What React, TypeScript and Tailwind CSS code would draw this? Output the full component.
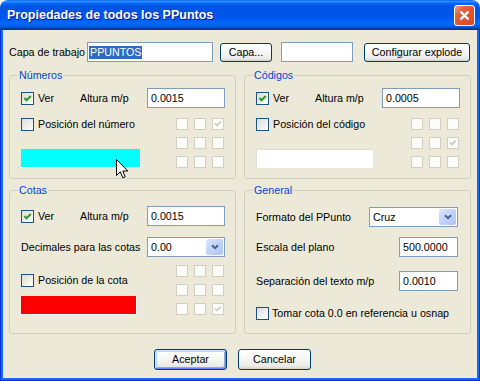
import type { ReactNode } from 'react';

const BTN =
  'flex shrink-0 items-center justify-center rounded-[3px] border border-[#003C74] bg-[linear-gradient(180deg,#FFFFFF_0%,#F7F7F4_45%,#ECEBE6_85%,#D6D0C5_100%)]';
const FIELD = 'flex shrink-0 items-center border border-[#7F9DB9] bg-white pl-[3px]';

function CheckBox({ checked }: { checked?: boolean }) {
  return (
    <span className="flex h-[13px] w-[13px] shrink-0 items-center justify-center border border-[#1C5180] bg-[linear-gradient(135deg,#DCDCD7_0%,#F4F4F1_70%,#FFFFFF_100%)]">
      {checked ? (
        <svg width="11" height="11" viewBox="0 0 11 11">
          <path d="M2.5 5 L4.5 7.3 L8.8 3" fill="none" stroke="#21A121" strokeWidth="2" />
        </svg>
      ) : null}
    </span>
  );
}

function PosGrid({ on }: { on: number }) {
  return (
    <div className="grid grid-cols-[12px_12px_12px] gap-x-[6px] gap-y-[7px]">
      {Array.from({ length: 9 }, (_, i) => (
        <span
          key={i}
          className="flex h-[12px] w-[12px] items-center justify-center border border-[#D2CFC2] bg-[#FBFBF8]"
        >
          {i === on ? (
            <svg width="10" height="10" viewBox="0 0 10 10">
              <path d="M2 4.5 L4 6.5 L8 2.5" fill="none" stroke="#C8C6B8" strokeWidth="1.5" />
            </svg>
          ) : null}
        </span>
      ))}
    </div>
  );
}

function DropDown({ value, width }: { value: string; width: string }) {
  return (
    <div className={`flex h-[20px] shrink-0 items-stretch border border-[#7F9DB9] bg-white ${width}`}>
      <span className="flex flex-1 items-center pl-[3px]">{value}</span>
      <span className="m-[1px] flex w-[17px] items-center justify-center rounded-[2px] bg-[linear-gradient(135deg,#DCE6FE_0%,#C1D3FB_50%,#AFC4F3_100%)]">
        <svg width="8" height="6" viewBox="0 0 8 6">
          <path d="M1 1.2 L4 4.2 L7 1.2" fill="none" stroke="#4D6185" strokeWidth="2" />
        </svg>
      </span>
    </div>
  );
}

function Group({ title, children, className }: { title: string; children: ReactNode; className: string }) {
  return (
    <fieldset className="min-w-0 rounded-[3px] border border-[#D0D0BF] p-0">
      <legend className="ml-[8px] px-[1px] leading-[13px] text-[#0046D5]">{title}</legend>
      <div className={className}>{children}</div>
    </fieldset>
  );
}

function VerRow({ value }: { value: string }) {
  return (
    <div className="flex h-[20px] items-center">
      <label className="flex w-[59px] shrink-0 items-center gap-[4px]">
        <CheckBox checked />
        Ver
      </label>
      <span className="w-[67px] shrink-0">Altura m/p</span>
      <div className={`${FIELD} h-[20px] w-[78px]`}>{value}</div>
    </div>
  );
}

function Cursor() {
  return (
    <svg className="absolute left-[95px] top-[10px]" width="13" height="21" viewBox="0 0 13 21">
      <path
        d="M0.5 0.5 L0.5 16.5 L4.3 12.8 L6.8 18.8 L9.2 17.8 L6.8 12 L11.8 12 Z"
        fill="#FFFFFF"
        stroke="#000000"
        strokeWidth="1"
      />
    </svg>
  );
}

export default function App() {
  return (
    <div className="flex h-[381px] w-[480px] flex-col whitespace-nowrap font-['Liberation_Sans',Arial,sans-serif] text-[10.7px] leading-[13px] text-black">
      <div className="flex h-[30px] shrink-0 items-center justify-between rounded-t-[8px] bg-[linear-gradient(180deg,#0058EE_0%,#3593FF_4%,#288EFF_6%,#127DFF_8%,#036FFC_10%,#0262EE_14%,#0057E5_20%,#0054E3_24%,#0055EB_56%,#005BF5_66%,#026AFE_76%,#0062EF_86%,#0052D6_92%,#0040AB_94%,#003092_100%)] pl-[7px] pr-[5px]">
        <span className="text-[12.5px] font-bold text-white [text-shadow:1px_1px_0_#0A1883]">
          Propiedades de todos los PPuntos
        </span>
        <button className="flex h-[21px] w-[21px] items-center justify-center rounded-[3px] border border-white bg-[linear-gradient(135deg,#F3A188_0%,#E4603C_30%,#D9441F_100%)]">
          <svg width="11" height="11" viewBox="0 0 11 11">
            <path d="M1.5 1.5 L9.5 9.5 M9.5 1.5 L1.5 9.5" stroke="#FFFFFF" strokeWidth="2.4" />
          </svg>
        </button>
      </div>

      <div className="flex-1 border-x border-b border-[#0831D9] bg-[#166AEE] px-[2px] pb-[2px]">
        <div className="h-full bg-[#ECE9D8] pt-[12px]">
          <div className="flex h-[20px] items-center pl-[6px]">
            <span className="w-[78px] shrink-0">Capa de trabajo</span>
            <div className="flex h-[20px] w-[126px] shrink-0 items-center border border-[#7F9DB9] bg-white pl-[1px]">
              <span className="bg-[#316AC5] px-[1px] text-white">PPUNTOS</span>
            </div>
            <button className={`${BTN} ml-[7px] h-[19px] w-[52px]`}>Capa...</button>
            <div className={`${FIELD} ml-[9px] h-[20px] w-[72px]`} />
            <button className={`${BTN} ml-[11px] h-[19px] w-[106px]`}>Configurar explode</button>
          </div>

          <div className="mt-[7px] grid grid-cols-2 gap-x-[8px] gap-y-[5px] px-[6px]">
            <Group title="Números" className="px-[11px] pb-[10px] pt-[6px]">
              <VerRow value="0.0015" />
              <div className="mt-[10px] flex justify-between">
                <div className="flex h-[50px] flex-col justify-between">
                  <label className="flex items-center gap-[4px]">
                    <CheckBox />
                    Posición del número
                  </label>
                  <div className="relative h-[19px] w-[120px] border-b border-r border-white bg-[#00FFFF]">
                    <Cursor />
                  </div>
                </div>
                <PosGrid on={2} />
              </div>
            </Group>

            <Group title="Códigos" className="px-[11px] pb-[10px] pt-[6px]">
              <VerRow value="0.0005" />
              <div className="mt-[10px] flex justify-between">
                <div className="flex h-[50px] flex-col justify-between">
                  <label className="flex items-center gap-[4px]">
                    <CheckBox />
                    Posición del código
                  </label>
                  <div className="h-[19px] w-[117px] border-l border-t border-[#E2DFD2] bg-white" />
                </div>
                <PosGrid on={5} />
              </div>
            </Group>

            <Group title="Cotas" className="px-[11px] pb-[18px] pt-[9px]">
              <VerRow value="0.0015" />
              <div className="mt-[11px] flex items-center">
                <span className="w-[126px] shrink-0">Decimales para las cotas</span>
                <DropDown value="0.00" width="w-[78px]" />
              </div>
              <div className="mt-[8px] flex justify-between">
                <div className="flex h-[50px] flex-col justify-between pt-[9px]">
                  <label className="flex items-center gap-[4px]">
                    <CheckBox />
                    Posición de la cota
                  </label>
                  <div className="h-[19px] w-[116px] border-b border-r border-white bg-[#FF0000]" />
                </div>
                <PosGrid on={8} />
              </div>
            </Group>

            <Group title="General" className="pl-[11px] pr-[12px] pt-[10px]">
              <div className="flex items-center justify-between">
                <span>Formato del PPunto</span>
                <DropDown value="Cruz" width="w-[89px]" />
              </div>
              <div className="mt-[10px] flex items-center justify-between">
                <span>Escala del plano</span>
                <div className={`${FIELD} h-[20px] w-[59px]`}>500.0000</div>
              </div>
              <div className="mt-[14px] flex items-center justify-between">
                <span>Separación del texto m/p</span>
                <div className={`${FIELD} h-[20px] w-[59px]`}>0.0010</div>
              </div>
              <label className="mt-[16px] flex items-center gap-[3px]">
                <CheckBox />
                Tomar cota 0.0 en referencia u osnap
              </label>
            </Group>
          </div>

          <div className="mt-[15px] flex gap-[11px] pl-[151px]">
            <button
              className={`${BTN} h-[21px] w-[73px] shadow-[inset_1px_1px_0_#CEE7FF,inset_-1px_-1px_0_#6982EE,inset_2px_2px_0_#BCD4F6,inset_-2px_-2px_0_#89ADE4]`}
            >
              Aceptar
            </button>
            <button className={`${BTN} h-[21px] w-[73px]`}>Cancelar</button>
          </div>
        </div>
      </div>
    </div>
  );
}
